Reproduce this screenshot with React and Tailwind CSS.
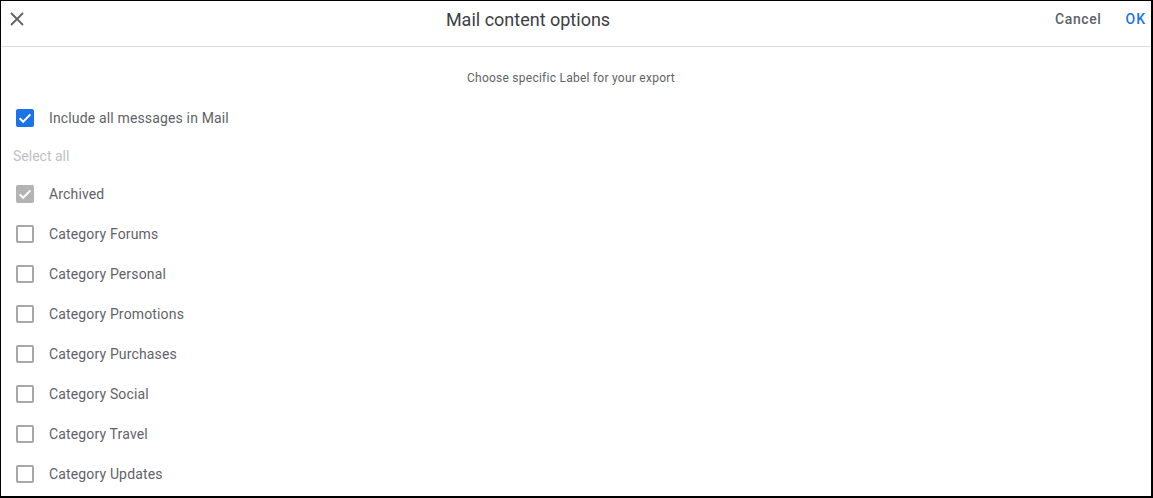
import React from "react";

const labels = [
    "Category Forums",
    "Category Personal",
    "Category Promotions",
    "Category Purchases",
    "Category Social",
    "Category Travel",
    "Category Updates",
];

function Check({ className }) {
    return (
        <svg viewBox="0 0 18 18" className={className} fill="none">
            <path d="M3.6 9.2l3.6 3.6 7.2-7.4" stroke="white" strokeWidth="2" />
        </svg>
    );
}

function Box({ state }) {
    if (state === "on") {
        return (
            <span className="w-[18px] h-[18px] rounded-[2px] bg-[#1a73e8] flex items-center justify-center">
                <Check className="w-[18px] h-[18px]" />
            </span>
        );
    }
    if (state === "disabled") {
        return (
            <span className="w-[18px] h-[18px] rounded-[2px] bg-[#b3b3b3] flex items-center justify-center">
                <Check className="w-[18px] h-[18px]" />
            </span>
        );
    }
    return <span className="w-[18px] h-[18px] rounded-[2px] border-2 border-[#a7a7a7] bg-white" />;
}

function Row({ label, state }) {
    return (
        <div className="h-10 flex items-center pl-[15px]">
            <Box state={state} />
            <span className="ml-[15px] text-[14px] text-[#5f6368] tracking-[0.15px]">{label}</span>
        </div>
    );
}

export default function App() {
    return (
        <div
            className="w-[1153px] h-[498px] bg-white border-l border-t border-r-2 border-b-2 border-black overflow-hidden"
            style={{ fontFamily: "Roboto, 'Liberation Sans', sans-serif" }}
        >
            {/* Header */}
            <div className="h-[46px] border-b border-[#dadce0]">
                <div className="h-9 flex items-center">
                    <button className="w-[32px] h-9 flex items-center justify-center">
                        <svg viewBox="0 0 14 14" className="w-[14px] h-[14px]" fill="none">
                            <path d="M1 1l12 12M13 1L1 13" stroke="#5f6368" strokeWidth="1.8" />
                        </svg>
                    </button>
                    <div className="flex-1 text-center pr-[32px] text-[18px] text-[#3c4043]">
                        Mail content options
                    </div>
                    <div className="flex items-center pr-[5px]">
                        <button className="text-[14px] font-medium text-[#5f6368] tracking-[0.6px]">Cancel</button>
                        <button className="ml-[24px] text-[14px] font-medium text-[#1a73e8] tracking-[1px]">OK</button>
                    </div>
                </div>
            </div>

            {/* Body */}
            <div className="pt-[23px]">
                <p className="text-center text-[12px] leading-4 text-[#5f6368] tracking-[0.25px] pr-[10px]">
                    Choose specific Label for your export
                </p>
                <div className="mt-3">
                    <Row label="Include all messages in Mail" state="on" />
                    <div className="h-9 flex items-center pl-3">
                        <span className="text-[14px] text-[#bdc1c6]">Select all</span>
                    </div>
                    <Row label="Archived" state="disabled" />
                    {labels.map((l) => (
                        <Row key={l} label={l} state="off" />
                    ))}
                </div>
            </div>
        </div>
    );
}
